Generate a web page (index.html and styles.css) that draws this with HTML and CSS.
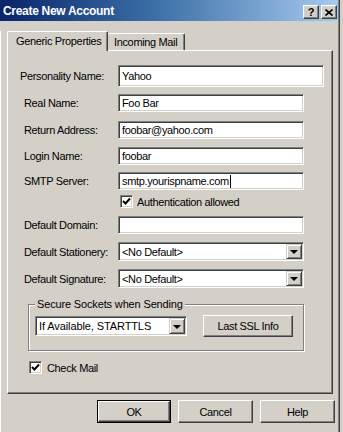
FILE: index.html
```
<!DOCTYPE html>
<html>
<head>
<meta charset="utf-8">
<link rel="stylesheet" href="styles.css">
</head>
<body>
<div class="window">
  <div class="titlebar">
    <span class="title">Create New Account</span>
    <div class="caps">
      <span class="cap q">?</span>
      <span class="cap">
        <svg width="8" height="7" viewBox="0 0 8 7"><path d="M0.5 0.5 L7.5 6.5 M7.5 0.5 L0.5 6.5" stroke="#000" stroke-width="1.6" fill="none"/></svg>
      </span>
    </div>
  </div>
  <div class="body">
    <div class="tabs">
      <div class="tab active">Generic Properties</div>
      <div class="tab">Incoming Mail</div>
    </div>
    <div class="panel">
      <div class="row r1"><span class="lbl l1">Personality Name:</span><div class="field wide">Yahoo</div></div>
      <div class="row r2"><span class="lbl">Real Name:</span><div class="field">Foo Bar</div></div>
      <div class="row r3"><span class="lbl">Return Address:</span><div class="field">foobar@yahoo.com</div></div>
      <div class="row r4"><span class="lbl">Login Name:</span><div class="field">foobar</div></div>
      <div class="row r5"><span class="lbl">SMTP Server:</span><div class="field">smtp.yourispname.com<span class="caret"></span></div></div>
      <div class="row auth"><span class="check"><svg width="9" height="9" viewBox="0 0 9 9"><path d="M1 4 L3.5 6.5 L8 1.5" stroke="#000" stroke-width="2" fill="none"/></svg></span><span class="ctext">Authentication allowed</span></div>
      <div class="row r6"><span class="lbl">Default Domain:</span><div class="field"></div></div>
      <div class="row r7"><span class="lbl">Default Stationery:</span><div class="field select">&lt;No Default&gt;<span class="drop"><i class="arrow"></i></span></div></div>
      <div class="row r8"><span class="lbl">Default Signature:</span><div class="field select">&lt;No Default&gt;<span class="drop"><i class="arrow"></i></span></div></div>
      <fieldset class="group">
        <legend>Secure Sockets when Sending</legend>
        <div class="grow">
          <div class="field select ssl">If Available, STARTTLS<span class="drop"><i class="arrow"></i></span></div>
          <div class="btn sslbtn">Last SSL Info</div>
        </div>
      </fieldset>
      <div class="row cm"><span class="check"><svg width="9" height="9" viewBox="0 0 9 9"><path d="M1 4 L3.5 6.5 L8 1.5" stroke="#000" stroke-width="2" fill="none"/></svg></span><span class="ctext">Check Mail</span></div>
    </div>
    <div class="btnrow">
      <div class="btn def"><span>OK</span></div>
      <div class="btn">Cancel</div>
      <div class="btn">Help</div>
    </div>
  </div>
</div>
</body>
</html>
```
FILE: styles.css
```
html, body {
  margin: 0;
  padding: 0;
  background: #d4d0c8;
}
body {
  font-family: "Liberation Sans", Arial, sans-serif;
  font-size: 11px;
  letter-spacing: -0.35px;
  color: #000;
}
.window {
  width: 338px;
  height: 432px;
  background: #d4d0c8;
  border-right: 1px solid #808080;
  box-shadow: 1px 0 0 #404040;
  overflow: hidden;
}
.titlebar {
  height: 21px;
  background: linear-gradient(to right, #0a246a 0%, #3a6ea5 45%, #a6caf0 100%);
  display: flex;
  align-items: center;
  justify-content: space-between;
  padding-left: 3px;
  padding-right: 1px;
}
.title {
  color: #fff;
  font-weight: bold;
  font-size: 12px;
  letter-spacing: -0.3px;
}
.caps {
  display: flex;
  gap: 2px;
  align-self: flex-start;
  margin-top: 5px;
}
.cap {
  width: 16px;
  height: 14px;
  box-sizing: border-box;
  background: #d4d0c8;
  border: 1px solid;
  border-color: #fff #404040 #404040 #fff;
  box-shadow: inset -1px -1px #808080;
  display: flex;
  align-items: center;
  justify-content: center;
  font-weight: bold;
  font-size: 11px;
  letter-spacing: 0;
  line-height: 1;
}
.body {
  border-left: 1px solid #fff;
  height: 411px;
}
.tabs {
  display: flex;
  align-items: flex-end;
  margin-top: 10px;
  margin-left: 6px;
  height: 19px;
}
.tab {
  box-sizing: border-box;
  height: 17px;
  padding: 0 5px 0 6px;
  display: flex;
  align-items: center;
  white-space: nowrap;
  border-top: 1px solid #fff;
  border-right: 1px solid #404040;
  box-shadow: inset -1px 0 #808080;
  background: #d4d0c8;
  border-radius: 2px 2px 0 0;
  width: 77px;
}
.tab.active {
  position: relative;
  z-index: 1;
  height: 20px;
  margin-bottom: -1px;
  width: 101px;
  border-left: 1px solid #fff;
  padding-left: 8px;
  padding-bottom: 1px;
}
.panel {
  margin-left: 6px;
  width: 326px;
  height: 344px;
  box-sizing: border-box;
  border-top: 1px solid #fff;
  border-left: 1px solid #fff;
  border-right: 1px solid #404040;
  border-bottom: 1px solid #404040;
  box-shadow: inset -1px -1px #808080;
  overflow: hidden;
}
.row {
  display: flex;
  align-items: center;
}
.lbl {
  width: 110px;
  box-sizing: border-box;
  padding-left: 16px;
  flex: none;
  white-space: nowrap;
}
.lbl.l1 { padding-left: 12px; }
.field {
  box-sizing: border-box;
  width: 186px;
  height: 18px;
  background: #fff;
  border: 1px solid;
  border-color: #808080 #fff #fff #808080;
  box-shadow: inset 1px 1px #404040, inset -1px -1px #d4d0c8;
  padding-left: 3px;
  display: flex;
  align-items: center;
  white-space: nowrap;
  position: relative;
}
.field.wide {
  width: 206px;
  height: 22px;
}
.r1 { margin-top: 14px; }
.r2 { margin-top: 7px; }
.r3 { margin-top: 9px; }
.r4 { margin-top: 8px; }
.r5 { margin-top: 7px; }
.auth { margin-top: 5px; padding-left: 112px; height: 13px; }
.r6 { margin-top: 8px; }
.r7 { margin-top: 8px; }
.r8 { margin-top: 8px; }
.field.select { height: 19px; }
.caret {
  display: inline-block;
  width: 1px;
  height: 13px;
  background: #000;
  margin-left: 1px;
}
.drop {
  position: absolute;
  right: 1px;
  top: 1px;
  bottom: 1px;
  width: 16px;
  box-sizing: border-box;
  background: #d4d0c8;
  border: 1px solid;
  border-color: #d4d0c8 #404040 #404040 #d4d0c8;
  box-shadow: inset 1px 1px #fff, inset -1px -1px #808080;
  display: flex;
  align-items: center;
  justify-content: center;
}
.arrow {
  width: 0;
  height: 0;
  border-left: 4px solid transparent;
  border-right: 4px solid transparent;
  border-top: 4px solid #000;
  margin-top: 1px;
}
.check {
  width: 13px;
  height: 13px;
  box-sizing: border-box;
  background: #fff;
  border: 1px solid;
  border-color: #808080 #fff #fff #808080;
  box-shadow: inset 1px 1px #404040, inset -1px -1px #d4d0c8;
  display: flex;
  align-items: center;
  justify-content: center;
  flex: none;
}
.ctext { margin-left: 4px; }
.group {
  margin: 10px 0 0 20px;
  width: 276px;
  height: 53px;
  box-sizing: border-box;
  padding: 0 6px 0 6px;
  border: 1px solid #808080;
  box-shadow: inset 1px 1px #fff, 1px 1px #fff;
  min-width: 0;
}
.group legend {
  padding: 0 2px;
  margin: 0;
  line-height: 13px;
  letter-spacing: -0.15px;
  background: #d4d0c8;
}
.grow {
  display: flex;
  align-items: center;
  margin-top: 4px;
  height: 22px;
}
.field.ssl {
  width: 152px;
  height: 20px;
  font-size: 11px;
  letter-spacing: -0.1px;
}
.btn {
  box-sizing: border-box;
  height: 23px;
  width: 75px;
  background: #d4d0c8;
  border: 1px solid;
  border-color: #fff #404040 #404040 #fff;
  box-shadow: inset -1px -1px #808080;
  display: flex;
  align-items: center;
  justify-content: center;
}
.sslbtn {
  width: 90px;
  height: 22px;
  margin-left: 16px;
}
.cm { margin-top: 10px; padding-left: 21px; }
.cm .ctext { margin-left: 5px; }
.btnrow {
  display: flex;
  gap: 7px;
  margin-top: 6px;
  margin-left: 96px;
}
.btn.def {
  width: 74px;
  border: 1px solid #000;
  box-shadow: none;
  padding: 0;
}
.btn.def span {
  flex: 1;
  align-self: stretch;
  display: flex;
  align-items: center;
  justify-content: center;
  border: 1px solid;
  border-color: #fff #404040 #404040 #fff;
  box-shadow: inset -1px -1px #808080;
}
```
